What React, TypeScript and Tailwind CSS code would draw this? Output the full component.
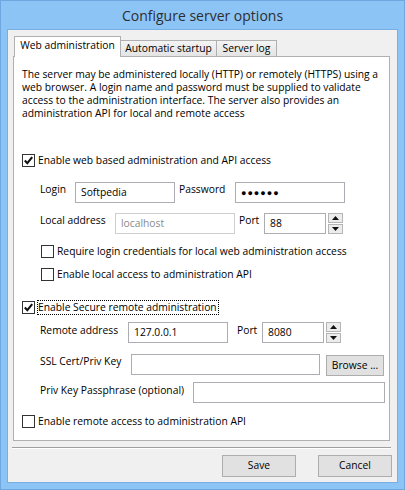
import type { ReactNode } from 'react';

const font = { fontFamily: '"Open Sans", "Noto Sans", sans-serif' };

function CheckMark() {
  return (
    <svg width="11" height="11" viewBox="0 0 11 11" aria-hidden="true">
      <path d="M1.8 5.6 L4.3 8.2 L9.2 2.2" fill="none" stroke="#111" strokeWidth="2.1" />
    </svg>
  );
}

function CheckRow({
  checked,
  label,
  focused,
  className = '',
}: {
  checked?: boolean;
  label: string;
  focused?: boolean;
  className?: string;
}) {
  return (
    <div className={`flex h-[15px] items-center ${className}`}>
      <span className="flex h-[13px] w-[13px] shrink-0 items-center justify-center border border-[#333] bg-white">
        {checked && <CheckMark />}
      </span>
      {focused ? (
        <span className="ml-[2px] flex h-[15px] items-center whitespace-nowrap border border-dotted border-black pr-px leading-[13px]">
          {label}
        </span>
      ) : (
        <span className="ml-[3px] whitespace-nowrap leading-[15px]">{label}</span>
      )}
    </div>
  );
}

function Field({
  width,
  value,
  muted,
  dots,
}: {
  width: string;
  value?: string;
  muted?: boolean;
  dots?: boolean;
}) {
  return (
    <div
      className={`flex h-[21px] shrink-0 items-center border bg-white pl-[5px] ${width} ${
        muted ? 'border-[#cfcfcf] text-[#8a8a8a]' : 'border-[#abadb3] text-black'
      }`}
    >
      {dots ? <span className="text-[9px] tracking-[1px]">●●●●●●</span> : value}
    </div>
  );
}

function Spinner() {
  return (
    <div className="ml-[2px] flex h-[21px] w-[15px] shrink-0 flex-col gap-px">
      <div className="flex h-[10px] items-center justify-center border border-[#b5b5b5] bg-[#ececec]">
        <svg width="7" height="4" viewBox="0 0 7 4" aria-hidden="true">
          <path d="M0 4 L3.5 0 L7 4 Z" fill="#111" />
        </svg>
      </div>
      <div className="flex h-[10px] items-center justify-center border border-[#b5b5b5] bg-[#ececec]">
        <svg width="7" height="4" viewBox="0 0 7 4" aria-hidden="true">
          <path d="M0 0 L3.5 4 L7 0 Z" fill="#111" />
        </svg>
      </div>
    </div>
  );
}

function Label({ width, children, className = '' }: { width: string; children: ReactNode; className?: string }) {
  return <div className={`shrink-0 whitespace-nowrap leading-[15px] ${width} ${className}`}>{children}</div>;
}

function Button({ children, className = '' }: { children: ReactNode; className?: string }) {
  return (
    <div
      className={`flex shrink-0 items-center justify-center border border-[#adadad] bg-[#e1e1e1] text-black ${className}`}
    >
      {children}
    </div>
  );
}

export default function App() {
  return (
    <div
      className="flex h-[490px] w-[405px] flex-col border border-[#6ea8de] bg-[#8cc4f6] px-[6px] pb-[6px] text-[10.3px] text-black"
      style={font}
    >
      <div className="flex h-[28px] shrink-0 items-center justify-center text-[14px] text-[#2e2e2e]">
        Configure server options
      </div>

      <div className="flex flex-1 flex-col border border-[#78aee2] bg-[#f0f0f0]">
        {/* Tabs */}
        <div className="ml-[6px] mt-[6px] flex items-end">
          <div className="relative z-10 -mb-px flex h-[21px] w-[107px] items-center justify-center border-x border-t border-[#b0b0b0] bg-white pb-[2px]">
            Web administration
          </div>
          <div className="flex h-[16px] w-[96px] items-center justify-center border-r border-t border-[#b0b0b0] bg-linear-to-b from-[#f4f4f4] to-[#e4e4e4]">
            Automatic startup
          </div>
          <div className="flex h-[16px] w-[60px] items-center justify-center border-r border-t border-[#b0b0b0] bg-linear-to-b from-[#f4f4f4] to-[#e4e4e4]">
            Server log
          </div>
        </div>

        {/* Tab panel */}
        <div className="ml-[5px] flex h-[385px] w-[377px] flex-col border border-[#b0b0b0] bg-white pl-[8px]">
          <div className="mt-[11px] leading-[13px]">
            <p className="whitespace-nowrap">The server may be administered locally (HTTP) or remotely (HTTPS) using a</p>
            <p className="whitespace-nowrap">web browser. A login name and password must be supplied to validate</p>
            <p className="whitespace-nowrap">access to the administration interface. The server also provides an</p>
            <p className="whitespace-nowrap">administration API for local and remote access</p>
          </div>

          <CheckRow checked label="Enable web based administration and API access" className="mt-[33px]" />

          <div className="mt-[14px] flex h-[21px] pl-[18px]">
            <Label width="w-[35px]">Login</Label>
            <Field width="w-[100px]" value="Softpedia" />
            <Label width="w-[56px]" className="ml-[4px]">
              Password
            </Label>
            <Field width="w-[110px]" dots />
          </div>

          <div className="mt-[10px] flex h-[21px] pl-[18px]">
            <Label width="w-[75px]">Local address</Label>
            <Field width="w-[120px]" value="localhost" muted />
            <Label width="w-[25px]" className="ml-[4px]">
              Port
            </Label>
            <Field width="w-[62px]" value="88" />
            <Spinner />
          </div>

          <div className="pl-[19px]">
            <CheckRow label="Require login credentials for local web administration access" className="mt-[10px]" />
            <CheckRow label="Enable local access to administration API" className="mt-[8px]" />
          </div>

          <CheckRow checked focused label="Enable Secure remote administration" className="mt-[18px]" />

          <div className="mt-[7px] flex h-[21px] pl-[18px]">
            <Label width="w-[88px]" className="pt-px">
              Remote address
            </Label>
            <Field width="w-[100px]" value="127.0.0.1" />
            <Label width="w-[25px]" className="ml-[9px] pt-px">
              Port
            </Label>
            <Field width="w-[62px]" value="8080" />
            <Spinner />
          </div>

          <div className="mt-[11px] flex h-[21px] pl-[18px]">
            <Label width="w-[91px]">SSL Cert/Priv Key</Label>
            <Field width="w-[189px]" />
            <Button className="ml-[6px] mt-px h-[21px] w-[58px]">Browse ...</Button>
          </div>

          <div className="mt-[7px] flex h-[21px] pl-[18px]">
            <Label width="w-[153px]" className="pt-px">
              Priv Key Passphrase (optional)
            </Label>
            <Field width="w-[192px]" />
          </div>

          <CheckRow label="Enable remote access to administration API" className="mt-[11px]" />
        </div>

        {/* Separator */}
        <div className="ml-[4px] mr-[6px] mt-[6px] h-[2px] border-t border-b border-t-[#a0a0a0] border-b-white" />

        <div className="mr-[5px] mt-[6px] flex justify-end gap-[22px]">
          <Button className="h-[22px] w-[74px]">Save</Button>
          <Button className="h-[22px] w-[74px]">Cancel</Button>
        </div>
      </div>
    </div>
  );
}
